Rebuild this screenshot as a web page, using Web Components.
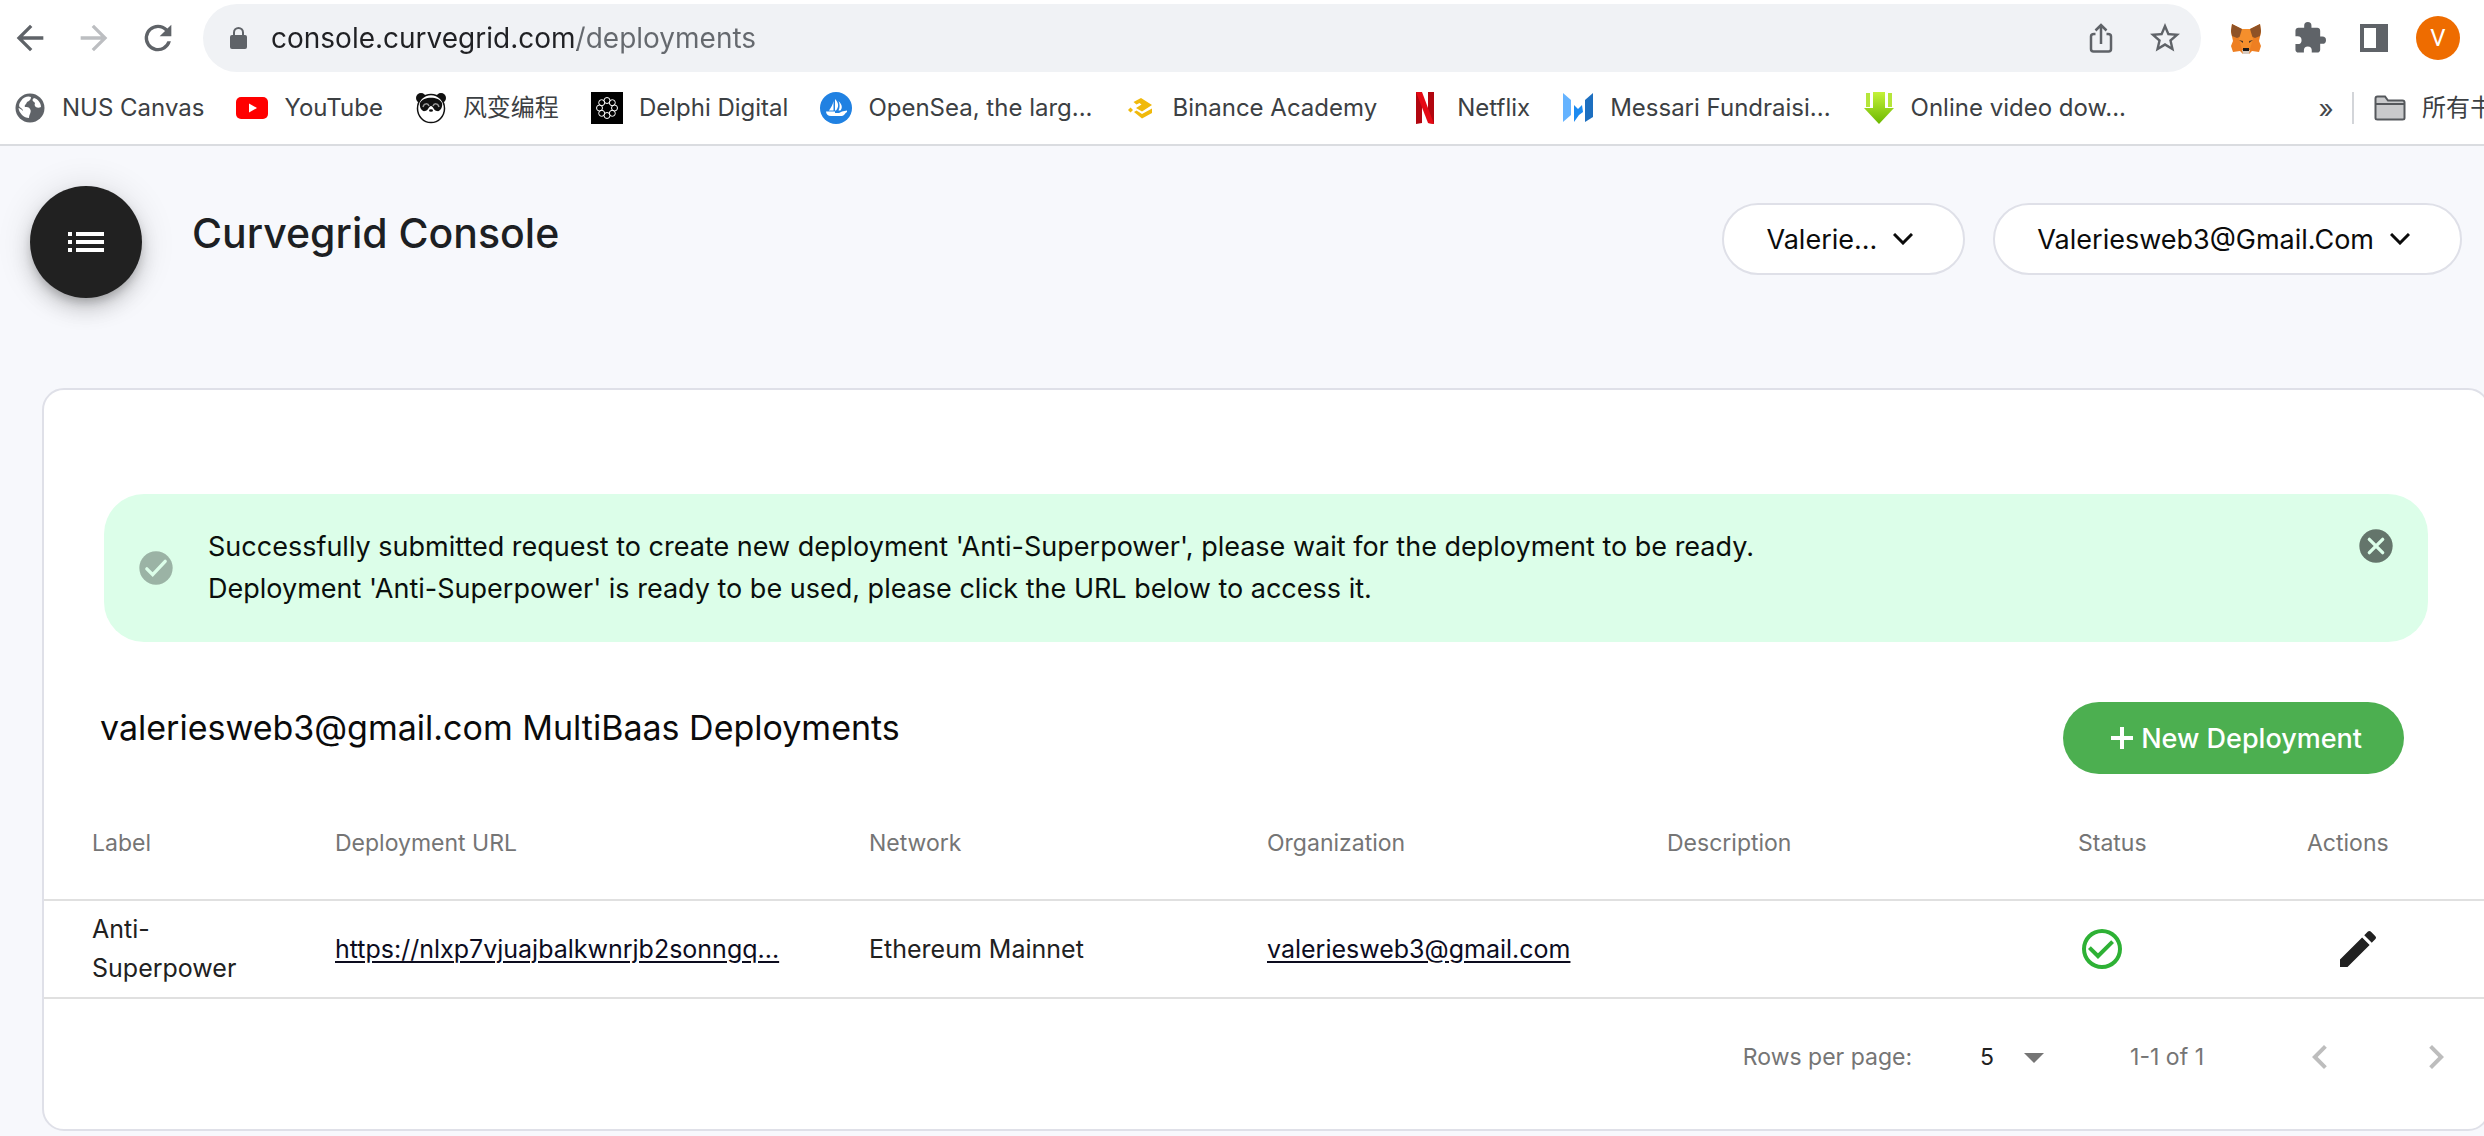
<!DOCTYPE html>
<html lang="en">
<head>
<meta charset="utf-8">
<title>Curvegrid Console</title>
<style>
  html, body { margin: 0; }
  body { min-height: 100vh; background: #f7f8fc; overflow-x: hidden; font-family: Inter, "Noto Sans CJK SC", sans-serif; color: #212121; }
</style>
</head>
<body>
<browser-toolbar></browser-toolbar>
<bookmarks-bar>
  <bookmark-link>
    <svg slot="icon" viewBox="0 0 32 32" width="32" height="32"><circle cx="16" cy="16" r="14.5" fill="#5f6368"/><path d="M7 9c3-5 8-5 10-4 0 3-2 4-4 5-1 3-3 3-2 5 2 0 4 0 5 2 2 3-1 5-1 9-5 0-10-5-10.500-10 2 1 3 1 4 3 1-1-1-3-3-4-1-2 0-4 1.500-6z" fill="#fff"/><path d="M20 6c4 1 7 5 7 9-2 1-5 1-6-1s1-3-1-4-2-3 0-4z" fill="#fff"/></svg>
    NUS Canvas</bookmark-link>
  <bookmark-link>
    <svg slot="icon" viewBox="0 0 32 32" width="32" height="32"><rect y="5" width="32" height="22" rx="5" fill="#f00"/><path d="M13 11.500v9l8-4.500z" fill="#fff"/></svg>
    YouTube</bookmark-link>
  <bookmark-link>
    <svg slot="icon" viewBox="0 0 32 32" width="32" height="32"><circle cx="6" cy="6" r="5" fill="#111"/><circle cx="26" cy="6" r="5" fill="#111"/><ellipse cx="16" cy="16.500" rx="13.500" ry="14" fill="#fff" stroke="#111" stroke-width="1.500"/><path d="M5 11C8 4 24 4 27 11c1 4-2 9-5 8-3 0-4-5-6-5s-3 5-6 5c-3 1-6-4-5-8z" fill="#111"/><path d="M8 15c1-4 5-4 6-1M24 15c-1-4-5-4-6-1" stroke="#999" stroke-width="1.500" fill="none"/><ellipse cx="16" cy="18.500" rx="2" ry="1.200" fill="#111"/></svg>
    风变编程</bookmark-link>
  <bookmark-link>
    <svg slot="icon" viewBox="0 0 32 32" width="32" height="32"><path d="M0 0h32v32H0z" fill="#000"/><g fill="none" stroke="#fff" stroke-width="1"><circle cx="16" cy="8.500" r="3"/><circle cx="21.300" cy="10.700" r="3"/><circle cx="23.500" cy="16" r="3"/><circle cx="21.300" cy="21.300" r="3"/><circle cx="16" cy="23.500" r="3"/><circle cx="10.700" cy="21.300" r="3"/><circle cx="8.500" cy="16" r="3"/><circle cx="10.700" cy="10.700" r="3"/></g></svg>
    Delphi Digital</bookmark-link>
  <bookmark-link>
    <svg slot="icon" viewBox="0 0 32 32" width="32" height="32"><circle cx="16" cy="16" r="16" fill="#2081e2"/><path d="M15 7c4 4 4 8 1 11.500h-1zM13.500 9v9.500H9c2-3 4-6 4.500-9.500zM18.500 9c4 4 4 7 2 9.500h-2c1.500-3 1.500-6 0-9.500zM6 19.500h9V21h4l3-1.500 5-1v1.500c-2 1-3 4-5 4H11c-3 0-5-2-5-4.500z" fill="#fff"/></svg>
    OpenSea, the larg...</bookmark-link>
  <bookmark-link>
    <svg slot="icon" viewBox="0 0 32 32" width="32" height="32"><path d="M8.500 10L16 6l11 7-10 6.500-6-3.500 5.500-3.500-2-1.500-3 1.500zM9 20l2.500-1.500L17 22l10-5.500v4.500l-10 5.500z" fill="#f0b90b"/><path d="M3 18l2.500-2.500L8 18l-2.500 2.500z" fill="#f0b90b"/></svg>
    Binance Academy</bookmark-link>
  <bookmark-link>
    <svg slot="icon" viewBox="0 0 32 32" width="32" height="32"><path d="M7 0h6v31L7 32zM19 0h6v32l-6-1z" fill="#b1060f"/><path d="M7 0h6l12 32-6-1z" fill="#e50914"/></svg>
    Netflix</bookmark-link>
  <bookmark-link>
    <svg slot="icon" viewBox="0 0 32 32" width="32" height="32"><path d="M1 1l8 7v15l-8 7z" fill="#65b3ff"/><path d="M12 13l4 4 4-4 1 7-4 3-5 7z" fill="#1c8af0"/><path d="M31 1l-8 7v22l8-5z" fill="#1d6fc0"/></svg>
    Messari Fundraisi...</bookmark-link>
  <bookmark-link>
    <svg slot="icon" viewBox="0 0 32 32" width="32" height="32"><defs><linearGradient id="g" x2="0" y2="1"><stop stop-color="#c4f23a"/><stop offset="1" stop-color="#6cb800"/></linearGradient></defs><path d="M10 0h12v16h9L16 32 1 16h9z" fill="url(#g)"/><path d="M3 1h4v14H3zM25 1h4v14h-4z" fill="#b5e63a"/></svg>
    Online video dow...</bookmark-link>
  <bookmark-link slot="folder">
    <svg slot="icon" viewBox="0 0 32 32" width="32" height="32"><path d="M1.500 26V6.500q0-2 2-2H11l3 4h14.500q2 0 2 2V26q0 1.500-2 1.500h-25q-2 0-2-1.500z" fill="#c9cacc" stroke="#55585c" stroke-width="2"/><path d="M2 12h28" stroke="#55585c" stroke-width="2"/></svg>
    所有书签</bookmark-link>
</bookmarks-bar>

<main>
  <console-header>
    Curvegrid Console
    <pill-menu slot="menus">Valerie...</pill-menu>
    <pill-menu slot="menus">Valeriesweb3@Gmail.Com</pill-menu>
  </console-header>
  <content-card>
    <success-alert>
      <div>Successfully submitted request to create new deployment 'Anti-Superpower', please wait for the deployment to be ready.</div>
      <div>Deployment 'Anti-Superpower' is ready to be used, please click the URL below to access it.</div>
    </success-alert>
    <section-heading>valeriesweb3@gmail.com MultiBaas Deployments</section-heading>
    <deployments-table></deployments-table>
    <table-pager></table-pager>
  </content-card>
</main>

<script>
const reset = `
  *, *::before, *::after { box-sizing: border-box; }
  button { border: 0; padding: 0; background: none; font: inherit; color: inherit; display: flex; align-items: center; justify-content: center; cursor: pointer; }
  svg { display: block; flex: none; }
`;
function define(name, css, html) {
  customElements.define(name, class extends HTMLElement {
    constructor() {
      super();
      this.attachShadow({ mode: 'open' }).innerHTML = `<style>${reset}${css}</style>${html}`;
    }
  });
}

define('browser-toolbar', `
  :host { display: flex; align-items: center; padding: 4px 24px 4px 10px; background: #fff; color: #5f6368; }
  .nav { display: flex; gap: 24px; margin-right: 25px; }
  .nav button:disabled { color: #bcbec1; }
  form { flex: 1; display: flex; align-items: center; height: 68px; border-radius: 34px; background: #f0f2f5; padding: 0 18px 0 27px; margin: 0; }
  input { flex: 1; min-width: 0; border: 0; outline: 0; padding: 0; margin: 0 24px; height: 40px; font: 28px Inter, sans-serif; color: #202124;
    background: linear-gradient(90deg, #202124 306px, #65696e 306px); -webkit-background-clip: text; background-clip: text; -webkit-text-fill-color: transparent; }
  .page { display: flex; gap: 28px; }
  .ext { display: flex; align-items: center; gap: 32px; margin-left: 29px; }
  .ext .avatar { width: 44px; height: 44px; border-radius: 50%; background: #ee6c00; color: #fff; font: 24px Roboto, sans-serif; margin-left: -6px; }
`, `
  <div class="nav">
    <button aria-label="Back"><svg width="40" height="40" viewBox="0 0 24 24" fill="currentColor"><path d="M20 11H7.830l5.590-5.590L12 4l-8 8 8 8 1.410-1.410L7.830 13H20v-2z"/></svg></button>
    <button aria-label="Forward" disabled><svg width="40" height="40" viewBox="0 0 24 24" fill="currentColor"><path d="M4 11h12.170l-5.590-5.590L12 4l8 8-8 8-1.410-1.410L16.170 13H4v-2z"/></svg></button>
    <button aria-label="Reload"><svg width="40" height="40" viewBox="0 0 24 24" fill="currentColor"><path d="M17.650 6.350A7.960 7.960 0 0 0 12 4a8 8 0 1 0 7.730 10h-2.080A6 6 0 1 1 12 6c1.660 0 3.140.69 4.220 1.780L13 11h7V4l-2.350 2.350z"/></svg></button>
  </div>
  <form>
    <svg width="17" height="22" viewBox="0 0 17 22"><rect y="8" width="17" height="14" rx="2" fill="#5f6368"/><path d="M4 9V5.500a4.500 4.500 0 0 1 9 0V9" fill="none" stroke="#5f6368" stroke-width="2"/></svg>
    <input type="text" aria-label="Address" value="console.curvegrid.com/deployments">
    <div class="page">
      <button type="button" aria-label="Share"><svg width="36" height="36" viewBox="0 0 36 36" fill="none" stroke="currentColor" stroke-width="2.500"><path d="M12.500 14H11q-3 0-3 2.500V29q0 2.500 2.500 2.500h15q2.500 0 2.500-2.500V16.500q0-2.500-3-2.500h-1.500M18 24V5.500M12.500 10.500L18 5l5.500 5.500"/></svg></button>
      <button type="button" aria-label="Bookmark"><svg width="36" height="36" viewBox="0 0 24 24" fill="currentColor"><path d="M22 9.240l-7.190-.62L12 2 9.190 8.630 2 9.240l5.460 4.730L5.820 21 12 17.270 18.180 21l-1.630-7.030L22 9.240zM12 15.400l-3.760 2.270 1-4.280-3.320-2.880 4.380-.38L12 6.100l1.710 4.040 4.380.38-3.320 2.880 1 4.280L12 15.400z"/></svg></button>
    </div>
  </form>
  <div class="ext">
    <button aria-label="MetaMask"><svg width="32" height="32" viewBox="0 0 32 32"><path d="M2 2l10 5h8l10-5 1 8-2 9 2 5-2 6-7-1-3 3h-6l-3-3-7 1-2-6 2-5-2-9z" fill="#ee7f22"/><path d="M2 2l10 5 2 6-7 3-5-2-1-5zM30 2L20 7l-2 6 7 3 5-2 1-5z" fill="#8f5226"/><path d="M12 7h8l3 10-3 10h-8L9 17z" fill="#f58f2c"/><path d="M9 18l4 1v2zM23 18l-4 1v2z" fill="#4a3527"/><path d="M12 28h8l-1 4h-6z" fill="#d6cbc2"/><path d="M13 26h6v3h-6z" fill="#1a1a1a"/></svg></button>
    <button aria-label="Extensions"><svg width="32" height="32" viewBox="1 1 22 22" fill="currentColor"><path d="M20.500 11H19V7c0-1.100-.9-2-2-2h-4V3.500a2.500 2.500 0 0 0-5 0V5H4c-1.100 0-2 .9-2 2v3.800h1.500a2.700 2.700 0 0 1 0 5.400H2V20c0 1.100.9 2 2 2h3.800v-1.500a2.700 2.700 0 0 1 5.400 0V22H17c1.100 0 2-.9 2-2v-4h1.500a2.500 2.500 0 0 0 0-5z"/></svg></button>
    <button aria-label="Side panel"><svg width="32" height="32" viewBox="0 0 32 32"><path d="M2 2h28v28H2zM6 6v20h12V6z" fill="currentColor" fill-rule="evenodd"/></svg></button>
    <button class="avatar" aria-label="Profile">V</button>
  </div>
`);

define('bookmarks-bar', `
  :host { display: flex; align-items: center; height: 64px; padding: 0 0 4px 14px; background: #fff; border-bottom: 2px solid #dadce0; overflow: hidden; }
  nav { display: flex; gap: 32px; flex: 1; min-width: 0; overflow: hidden; }
  button { color: #45484c; font-size: 26px; width: 24px; height: 40px; margin-right: 14px; }
  .folder { flex: 0 0 132px; overflow: hidden; border-left: 2px solid #d3d5d9; padding-left: 20px; height: 32px; }
`, `<nav aria-label="Bookmarks"><slot></slot></nav><button aria-label="More bookmarks">»</button><div class="folder"><slot name="folder"></slot></div>`);

define('bookmark-link', `
  :host { display: block; flex: none; }
  a { display: flex; align-items: center; gap: 16px; height: 32px; color: #3c4043; text-decoration: none; white-space: nowrap; font: 24px/32px Inter, "Noto Sans CJK SC", sans-serif; }
  ::slotted(svg) { display: block; flex: none; }
`, `<a href="#"><slot name="icon"></slot><span><slot></slot></span></a>`);

define('console-header', `
  :host { display: flex; align-items: flex-start; padding: 40px 22px 90px 30px; }
  .fab { width: 112px; height: 112px; border-radius: 50%; background: #212121; color: #fff; flex: none;
    box-shadow: 0 6px 10px -2px rgba(0,0,0,.2), 0 12px 20px rgba(0,0,0,.14), 0 2px 36px rgba(0,0,0,.12); }
  h1 { margin: 0 0 0 50px; flex: 1; font-weight: 500; font-size: 41px; line-height: 94px; color: #1d1f23; }
  .menus { display: flex; gap: 28px; padding-top: 17px; }
`, `
  <button class="fab" aria-label="Menu"><svg width="36" height="20" viewBox="0 0 36 20" fill="currentColor"><path d="M0 0h4v4H0zM8 0h28v4H8zM0 8h4v4H0zM8 8h28v4H8zM0 16h4v4H0zM8 16h28v4H8z"/></svg></button>
  <h1><slot></slot></h1>
  <div class="menus"><slot name="menus"></slot></div>
`);

define('pill-menu', `
  :host { display: block; }
  button { height: 72px; padding: 0 50px 0 42px; gap: 16px; border: 2px solid #dfe0e8; border-radius: 36px; background: #fff; color: #0b0b0b; font-size: 27px; white-space: nowrap; }
`, `<button aria-haspopup="menu"><span><slot></slot></span><svg width="20" height="12" viewBox="0 0 20 12" fill="none" stroke="currentColor" stroke-width="3"><path d="M1 1l9 9 9-9"/></svg></button>`);

define('content-card', `
  :host { display: block; margin: 0 -6px 5px 42px; padding: 104px 0 14px; background: #fff; border: 2px solid #dfe0e8; border-radius: 22px; }
`, `<slot></slot>`);

define('success-alert', `
  :host { display: flex; align-items: center; gap: 32px; margin: 0 60px; padding: 32px; border-radius: 40px; background: #dcfee9; color: #0a0f0c; font-size: 27px; line-height: 42px; }
  .text { flex: 1; }
  button { align-self: flex-start; color: #64756b; }
`, `
  <svg width="40" height="40" viewBox="0 0 24 24" fill="#9bb3a5"><path d="M12 2a10 10 0 1 0 0 20 10 10 0 0 0 0-20z"/><path d="M6.500 12.500l3.500 3.500 7.500-8" fill="none" stroke="#dcfee9" stroke-width="2" stroke-linecap="round"/></svg>
  <div class="text" role="status"><slot></slot></div>
  <button aria-label="Dismiss"><svg width="40" height="40" viewBox="0 0 24 24" fill="currentColor"><circle cx="12" cy="12" r="10"/><path d="M8 8l8 8M16 8l-8 8" stroke="#dcfee9" stroke-width="2" stroke-linecap="round"/></svg></button>
`);

define('section-heading', `
  :host { display: flex; align-items: flex-start; justify-content: space-between; margin-top: 60px; padding: 0 84px 0 56px; }
  h2 { margin: 0; font-weight: 400; font-size: 34px; line-height: 52px; color: #0b0b0b; }
  button { height: 72px; padding: 0 42px 0 48px; gap: 8px; border-radius: 36px; background: #4caf50; color: #fff; font-weight: 500; font-size: 27px; }
`, `<h2><slot></slot></h2><button><svg width="22" height="22" viewBox="0 0 22 22" fill="currentColor"><path d="M9 0h4v9h9v4h-9v9H9v-9H0V9h9z"/></svg>New Deployment</button>`);

define('deployments-table', `
  :host { display: block; margin-top: 13px; }
  table { width: 100%; table-layout: fixed; border-spacing: 0; }
  th, td { padding: 0 0 0 48px; text-align: left; vertical-align: middle; border-bottom: 2px solid #e0e0e0; white-space: nowrap; }
  th { height: 114px; font-weight: 400; font-size: 23px; color: #757575; }
  td { height: 98px; font-size: 25px; line-height: 39px; color: #212121; }
  .label { white-space: normal; }
  a { color: #0c0c1e; text-underline-offset: 3px; text-decoration-thickness: 2px; }
  td button { margin-left: 27px; }
`, `
  <table>
    <colgroup><col style="width:243px"><col style="width:534px"><col style="width:398px"><col style="width:400px"><col><col style="width:229px"><col style="width:229px"></colgroup>
    <thead><tr><th>Label</th><th>Deployment URL</th><th>Network</th><th>Organization</th><th>Description</th><th>Status</th><th>Actions</th></tr></thead>
    <tbody><tr>
      <td class="label">Anti-<wbr>Superpower</td>
      <td><a href="#">https://nlxp7vjuajbalkwnrjb2sonngq...</a></td>
      <td>Ethereum Mainnet</td>
      <td><a href="#">valeriesweb3@gmail.com</a></td>
      <td></td>
      <td><svg role="img" aria-label="Ready" width="48" height="48" viewBox="0 0 24 24" fill="#2eb135"><path d="M16.590 7.580L10 14.170l-3.590-3.580L5 12l5 5 8-8zM12 2a10 10 0 1 0 0 20 10 10 0 0 0 0-20zm0 18a8 8 0 1 1 0-16 8 8 0 0 1 0 16z"/></svg></td>
      <td><button aria-label="Edit"><svg width="48" height="48" viewBox="0 0 24 24" fill="#212121"><path d="M3 17.250V21h3.750L17.810 9.940l-3.750-3.750L3 17.250zM20.710 7.040a1 1 0 0 0 0-1.410l-2.340-2.340a1 1 0 0 0-1.410 0l-1.830 1.830 3.750 3.750 1.830-1.830z"/></svg></button></td>
    </tr></tbody>
  </table>
`);

define('table-pager', `
  :host { display: flex; align-items: center; justify-content: flex-end; height: 116px; padding-right: 4px; font-size: 23px; color: #757575; }
  .rows { display: grid; grid-template-columns: 30px 48px; align-items: center; margin: 0 72px 0 68px; }
  select { grid-area: 1 / 1 / 2 / 3; appearance: none; border: 0; background: none; padding: 0; height: 48px; font: inherit; color: #212121; }
  .rows svg { grid-area: 1 / 2; pointer-events: none; }
  .range { margin-right: 68px; }
  button { width: 96px; height: 96px; color: #bdbdbd; }
  button + button { margin-left: 20px; }
`, `
  <label for="rows">Rows per page:</label>
  <div class="rows"><select id="rows"><option>5</option><option>10</option><option>25</option></select>
    <svg width="48" height="48" viewBox="0 0 24 24" fill="#757575"><path d="M7 10l5 5 5-5z"/></svg></div>
  <span class="range">1-1 of 1</span>
  <button disabled aria-label="Previous page"><svg width="48" height="48" viewBox="0 0 24 24" fill="currentColor"><path d="M15.410 7.410L14 6l-6 6 6 6 1.410-1.410L10.830 12z"/></svg></button>
  <button disabled aria-label="Next page"><svg width="48" height="48" viewBox="0 0 24 24" fill="currentColor"><path d="M8.590 16.590L13.170 12 8.590 7.410 10 6l6 6-6 6z"/></svg></button>
`);
</script>
</body>
</html>
